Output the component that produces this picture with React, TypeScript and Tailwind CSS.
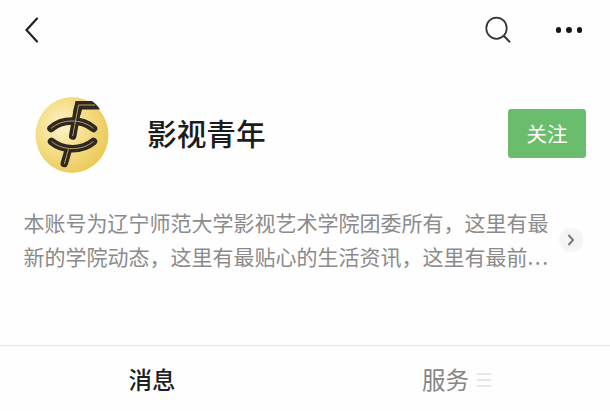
import { useState } from "react";

type TabKey = "messages" | "services";

const Avatar = () => (
  <svg width="74" height="76" viewBox="0 0 74 76" fill="none">
    <defs>
      <radialGradient id="gold" cx="0.36" cy="0.38" r="0.68">
        <stop offset="0" stopColor="#fdf3cc" />
        <stop offset="0.45" stopColor="#f6e08f" />
        <stop offset="1" stopColor="#ebc956" />
      </radialGradient>
    </defs>
    <ellipse cx="37" cy="38" rx="36.5" ry="38" fill="url(#gold)" />
    <g strokeLinecap="round" stroke="#2f2822" strokeWidth="7.5">
      <path d="M16 31.5C27 21.5 47 21.5 58.5 31.5" />
      <path d="M16.5 44.5C28 54 47 54 58.5 44.5" />
      <path d="M37.7 39L42.5 12" />
      <path d="M33.5 52L29.3 66.5" />
    </g>
    <path d="M40.5 4H57C60 6 63 9 65 12.5H47L45.5 18L38 16Z" fill="#2f2822" />
    <g stroke="#b2a355" strokeWidth="1">
      <path d="M16 31.5C27 21.5 47 21.5 58.5 31.5" />
      <path d="M16.5 44.5C28 54 47 54 58.5 44.5" />
      <path d="M37.7 39L43.5 8H60" />
      <path d="M33.5 52L29.3 67" />
    </g>
  </svg>
);

const App = () => {
  const [tab, setTab] = useState<TabKey>("messages");

  return (
    <div className="flex h-[411px] w-[610px] flex-col overflow-hidden bg-[#fefefe] font-['Noto_Sans_CJK_SC',sans-serif]">
      <div className="flex h-[60px] shrink-0 items-center pl-6 pr-[28px]">
        <button aria-label="Back">
          <svg width="16" height="28" viewBox="0 0 16 28" fill="none">
            <path
              d="M13 2.5L2.5 14L13 25.5"
              stroke="#222"
              strokeWidth="2.2"
              strokeLinecap="round"
            />
          </svg>
        </button>
        <div className="ml-auto flex items-center">
          <button aria-label="Search">
            <svg width="28" height="28" viewBox="0 0 28 28" fill="none">
              <ellipse cx="12.5" cy="12.2" rx="10.2" ry="10.6" stroke="#333" strokeWidth="1.7" />
              <path d="M19.5 19.5L26 26.2" stroke="#333" strokeWidth="2" />
            </svg>
          </button>
          <button aria-label="More" className="ml-[44px] flex gap-[5px]">
            <span className="size-[5.5px] rounded-full bg-[#151515]"></span>
            <span className="size-[5.5px] rounded-full bg-[#151515]"></span>
            <span className="size-[5.5px] rounded-full bg-[#151515]"></span>
          </button>
        </div>
      </div>

      <div className="flex h-[150px] shrink-0 items-center pl-[35px] pr-6">
        <Avatar />
        <h1 className="mb-1 ml-[38px] text-[29.7px] font-medium leading-10 text-[#1c1c1c]">
          影视青年
        </h1>
        <button className="mb-[3px] ml-auto h-[49px] w-[78px] rounded-[3px] bg-[#6bbd6e] text-[20.5px] text-white">
          关注
        </button>
      </div>

      <div className="flex h-[135px] shrink-0 items-start pl-[23.5px] pr-[27px]">
        <p className="-mt-[5px] whitespace-nowrap text-[21px] leading-[34px] text-[#8b8b8b]">
          本账号为辽宁师范大学影视艺术学院团委所有，这里有最
          <br />
          新的学院动态，这里有最贴心的生活资讯，这里有最前
          <span className="tracking-[1.5px]">...</span>
        </p>
        <button
          aria-label="Expand"
          className="ml-auto mt-[18px] flex size-6 items-center justify-center rounded-full bg-[#f5f5f5]"
        >
          <svg width="8" height="12" viewBox="0 0 8 12" fill="none">
            <path d="M1.5 1L6 6L1.5 11" stroke="#777" strokeWidth="1.9" />
          </svg>
        </button>
      </div>

      <div className="grid flex-1 grid-cols-2 border-t border-[#e4e4e4] pt-[3px] text-[23.5px]">
        <button
          onClick={() => setTab("messages")}
          className={
            tab === "messages"
              ? "flex items-center justify-center pr-px font-medium text-[#1f1f1f]"
              : "flex items-center justify-center pr-px text-[#858585]"
          }
        >
          消息
        </button>
        <button
          onClick={() => setTab("services")}
          className={
            tab === "services"
              ? "flex items-center justify-center gap-2 pr-0.5 font-medium text-[#1f1f1f]"
              : "flex items-center justify-center gap-2 pr-0.5 text-[#858585]"
          }
        >
          服务
          <span className="flex flex-col gap-1">
            <span className="h-0.5 w-[14px] bg-[#e6e6e6]"></span>
            <span className="h-0.5 w-[14px] bg-[#e6e6e6]"></span>
            <span className="h-0.5 w-[14px] bg-[#e6e6e6]"></span>
          </span>
        </button>
      </div>
    </div>
  );
};

export default App;
